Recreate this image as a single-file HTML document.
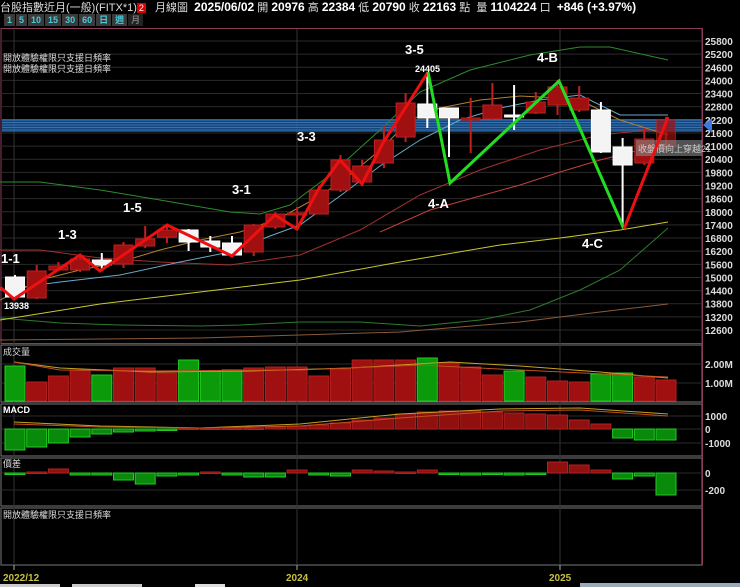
<!DOCTYPE html>
<html><head><meta charset="utf-8">
<style>
html,body{margin:0;padding:0;background:#000;width:740px;height:587px;overflow:hidden;font-family:"Liberation Sans","Noto Sans CJK TC",sans-serif}
#top{position:absolute;left:0;top:0;width:740px;height:14px;color:#ddd;font-size:11px;line-height:14px;white-space:nowrap}
#top b{color:#fff;font-size:12px}
.badge{display:inline-block;background:#d00;color:#fff;font-size:9px;width:9px;height:10px;line-height:10px;text-align:center}
#btns{position:absolute;left:4px;top:14px;height:12px;display:flex;gap:1px}
#btns span{background:#3a3a3a;color:#4cd;font-size:9px;line-height:12px;padding:0 3px;font-weight:bold}
svg{position:absolute;left:0;top:0}
</style></head><body>
<div id="top">台股指數近月(一般)(FITX*1)<span class="badge">2</span>&nbsp;&nbsp; 月線圖 &nbsp;<b>2025/06/02</b> 開 <b>20976</b> 高 <b>22384</b> 低 <b>20790</b> 收 <b>22163</b> 點 &nbsp;量 <b>1104224</b> 口 &nbsp;<b>+846 (+3.97%)</b></div>
<div id="btns"><span>1</span><span>5</span><span>10</span><span>15</span><span>30</span><span>60</span><span>日</span><span>週</span><span style="color:#777;background:#222">月</span></div>
<svg id="s" width="740" height="587" xmlns="http://www.w3.org/2000/svg" font-family="Liberation Sans, Noto Sans CJK TC, sans-serif"></svg>
<script>
const S=document.getElementById('s');let h='';
const yp=p=>41+(25800-p)*0.021894;
h+='<rect x="1" y="28.5" width="701" height="315" fill="none" stroke="#8a3a5a"/>';
[[345,402],[404,456],[458,506],[508,565]].forEach(a=>h+=`<rect x="1" y="${a[0]}" width="701" height="${a[1]-a[0]}" fill="none" stroke="#777"/>`);
h+='<line x1="702.5" y1="28" x2="702.5" y2="565" stroke="#8a3a5a"/>';
for(let p=12600;p<=25800;p+=600){const y=yp(p);h+=`<line x1="2" y1="${y}" x2="702" y2="${y}" stroke="#2a2a2a"/><text x="705" y="${y+4}" fill="#ddd" font-size="10" font-weight="bold">${p}</text>`;}
[14,297,560].forEach(x=>h+=`<line x1="${x}" y1="29" x2="${x}" y2="565" stroke="#333"/>`);
[[364,'2.00M'],[383,'1.00M'],[416,'1000'],[429,'0'],[443,'-1000'],[473,'0'],[490,'-200']].forEach(a=>h+=`<line x1="2" y1="${a[0]}" x2="702" y2="${a[0]}" stroke="#2a2a2a"/><text x="705" y="${a[0]+4}" fill="#ddd" font-size="10" font-weight="bold">${a[1]}</text>`);
h+='<rect x="2" y="119" width="700" height="13" fill="#1c5fa8" opacity="0.75"/>';
for(let y=120;y<132;y+=2.5)h+=`<line x1="2" y1="${y}" x2="702" y2="${y}" stroke="#5a9ae0" stroke-width="0.6"/>`;
h+='<polygon points="703,125 712,118 712,133" fill="#3a7ae0"/>';
const pl=(pts,c,w)=>h+=`<polyline points="${pts}" fill="none" stroke="${c}" stroke-width="${w||1}"/>`;
pl('0,250 40,250 100,258 160,262 230,265 300,255 360,230 420,195 480,170 540,150 600,135 668,128','#a03030');
pl('0,182 40,182 100,190 160,200 230,212 260,214 290,205 330,175 380,130 420,92 470,70 530,55 580,47 610,47 668,60','#2e8a2e');
pl('0,318 60,323 120,325 200,326 240,325 300,322 360,322 420,326 480,320 530,310 580,290 620,270 668,228','#2e7a2e');
pl('0,290 60,282 120,275 180,262 230,252 270,236 300,225 340,196 380,166 420,140 460,120 500,108 540,100 580,95 620,115 668,115','#6aaac8');
pl('0,300 40,280 80,270 120,262 160,250 200,240 240,232 280,218 320,196 350,175 380,150 410,120 440,108 480,100 520,96 560,98 580,100 620,120 668,135','#b08030');
pl('0,320 100,304 200,292 300,280 400,262 500,245 560,238 620,230 668,222','#c8c830');
pl('0,340 200,338 400,332 520,322 600,312 668,304','#8a5a3a');
pl('380,232 430,210 480,196 520,185 560,172 600,160 640,150 668,148','#c04040');
const C=[[277,297,275,297,'w'],[271,298,265,299,'r'],[266,270,262,271,'r'],[259,270,255,272,'r'],[260,265,253,270,'w'],[245,264,242,268,'r'],[239,246,226,248,'r'],[230,237,225,243,'r'],[230,242,229,251,'w'],[241,247,236,252,'w'],[243,255,236,256,'w'],[225,252,224,256,'r'],[214,227,212,229,'r'],[213,215,207,226,'r'],[190,214,186,214,'r'],[160,190,155,192,'r'],[166,182,160,186,'r'],[140,163,125,168,'r'],[103,137,93,142,'r'],[104,118,72,128,'w'],[108,118,108,157,'w'],[118,119,98,153,'r'],[105,119,83,120,'r'],[115,117,85,130,'w'],[102,113,92,114,'r'],[87,105,80,115,'r'],[98,110,86,112,'r'],[110,152,102,153,'w'],[147,165,138,228,'w'],[139,163,128,165,'r'],[120,147,117,150,'r']];
C.forEach((c,i)=>{const x=15+i*21.7;const col=c[4]=='r'?'#a01010':'#f4f4f4';const st=c[4]=='r'?'#c02020':'#fff';
h+=`<line x1="${x}" y1="${c[2]}" x2="${x}" y2="${c[3]}" stroke="${st}" stroke-width="2"/>`;
h+=`<rect x="${x-9.5}" y="${c[0]}" width="19" height="${Math.max(2,c[1]-c[0])}" fill="${col}" stroke="${st}" ${i==30?'opacity="0.7"':''}/>`;});
h+='<rect x="636" y="140" width="66" height="16" fill="#888" opacity="0.6"/><text x="638" y="152" fill="#ccc" font-size="9">收盤價向上穿越21</text>';
pl('0,287 14,299 80,255 100,271 167,225 232,256 275,215 297,229 318,190 340,160 362,184 383,143 404,110 428,72','#ee1010',3);
pl('428,72 450,183 559,81 624,229','#22dd22',3);
pl('624,229 668,117','#ee1010',3);
[['1-1',1,263],['1-3',58,239],['1-5',123,212],['3-1',232,194],['3-3',297,141],['3-5',405,54],['4-A',428,208],['4-B',537,62],['4-C',582,248]].forEach(a=>h+=`<text x="${a[1]}" y="${a[2]}" fill="#fff" font-size="13" font-weight="bold">${a[0]}</text>`);
h+='<text x="4" y="309" fill="#fff" font-size="9" font-weight="bold">13938</text><text x="415" y="72" fill="#fff" font-size="9" font-weight="bold">24405</text>';
h+='<text x="3" y="61" fill="#ddd" font-size="9">開放體驗權限只支援日頻率</text><text x="3" y="72" fill="#ddd" font-size="9">開放體驗權限只支援日頻率</text>';
const V=[366,382,376,370,375,368,368,373,360,371,370,368,367,367,376,369,360,360,360,358,363,367,375,371,377,381,382,374,373,377,380];
const vc='grrrgrrrgggrrrrrrrrgrrrgrrrggrr';
V.forEach((t,i)=>{const x=15+i*21.7;const g=vc[i]=='g';h+=`<rect x="${x-10}" y="${t}" width="20" height="${401-t}" fill="${g?'#0a9a0a':'#a01010'}" stroke="${g?'#2c2':'#b02020'}"/>`;});
pl('14,362 60,368 150,372 250,371 350,368 450,362 520,366 600,372 668,378','#c8a020');
pl('14,362 60,370 150,371 300,370 420,365 520,370 668,377','#c05020');
const M=[450,447,443,437,434,432,431,430,428,428,428,428,427,426,425,423,420,418,414,412,411,411,412,413,414,415,420,424,438,440,440];
M.forEach((t,i)=>{const x=15+i*21.7;const neg=t>429;const y=neg?429:t,hh=Math.max(1.5,Math.abs(t-429));h+=`<rect x="${x-10}" y="${y}" width="20" height="${hh}" fill="${neg?'#0a8a0a':'#901010'}" stroke="${neg?'#2c2':'#b02020'}"/>`;});
pl('14,422 100,426 200,428 300,424 400,414 500,409 580,408 668,414','#c8a020');
pl('14,424 100,427 200,428 300,426 400,418 500,411 580,410 668,416','#c05020');
const P=[474,472,469,475,475,480,484,476,475,472,475,477,477,470,475,476,470,471,472,470,474,475,474,475,474,462,465,470,479,476,495];
P.forEach((t,i)=>{const x=15+i*21.7;const neg=t>473;const y=neg?473:t,hh=Math.max(1.5,Math.abs(t-473));h+=`<rect x="${x-10}" y="${y}" width="20" height="${hh}" fill="${neg?'#0a8a0a':'#901010'}" stroke="${neg?'#2c2':'#b02020'}"/>`;});
h+='<text x="3" y="355" fill="#ddd" font-size="9">成交量</text><text x="3" y="413" fill="#fff" font-size="9" font-weight="bold">MACD</text><text x="3" y="467" fill="#ddd" font-size="9">價差</text><text x="3" y="518" fill="#ddd" font-size="9">開放體驗權限只支援日頻率</text>';
[[14,'2022/12',3],[297,'2024',286],[560,'2025',549]].forEach(a=>h+=`<line x1="${a[0]}" y1="565" x2="${a[0]}" y2="570" stroke="#aaa"/><text x="${a[2]}" y="581" fill="#c8c040" font-size="10" font-weight="bold">${a[1]}</text>`);
h+='<rect x="0" y="584" width="60" height="3" fill="#ccc"/><rect x="72" y="584" width="70" height="3" fill="#ccc"/><rect x="195" y="584" width="30" height="3" fill="#ddd"/><rect x="580" y="583" width="160" height="4" fill="#9ab"/>';
S.innerHTML=h;
</script>
</body></html>
